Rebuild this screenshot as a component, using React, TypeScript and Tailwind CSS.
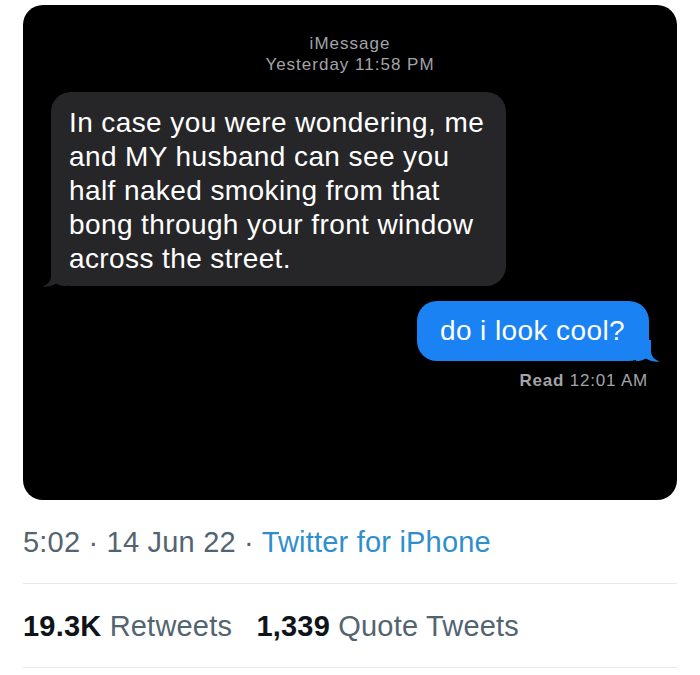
import React from "react";

function Tail({ color, flip }: { color: string; flip?: boolean }) {
  return (
    <svg
      width="24"
      height="22"
      viewBox="0 0 24 22"
      className={flip ? "absolute -right-[11px] bottom-[-1px] -scale-x-100" : "absolute -left-[9px] bottom-[-1px]"}
      aria-hidden="true"
    >
      <path
        d="M9 0 L9 11 C9 16 6 19.5 0 21.6 C6 22.2 11 20.6 14 18.4 C17 20 20 21 24 21 L24 0 Z"
        fill={color}
      />
    </svg>
  );
}

export default function App() {
  return (
    <div className="w-[700px] h-[675px] bg-white pt-[5px] px-[23px] font-['Liberation_Sans',Arial,sans-serif]">
      <div className="bg-black rounded-[20px] h-[495px] pt-[28px] flex flex-col">
        <div className="text-center text-[17px] leading-[21px] tracking-[1px] text-[#a3a3a8]">
          <p>iMessage</p>
          <p>Yesterday 11:58 PM</p>
        </div>

        <div className="relative ml-[28px] mt-[17px] w-[455px] bg-[#262628] rounded-[20px] pl-[18px] pr-[10px] pt-[14px] pb-[10px] text-white text-[28px] leading-[34px] tracking-[0.4px]">
          <p>
            In case you were wondering, me
            <br />
            and MY husband can see you
            <br />
            half naked smoking from that
            <br />
            bong through your front window
            <br />
            across the street.
          </p>
          <Tail color="#262628" />
        </div>

        <div className="flex flex-col items-end mr-[28px] mt-[15px]">
          <div className="relative bg-[#1a82f2] rounded-[20px] w-[232px] pl-[23px] py-[13px] text-white text-[28px] leading-[34px] tracking-[0.4px]">
            do i look cool?
            <Tail color="#1a82f2" flip />
          </div>
          <p className="mt-[9px] mr-px text-[17px] leading-[21px] tracking-[0.8px] text-[#a3a3a8]">
            <span className="font-bold">Read</span> 12:01 AM
          </p>
        </div>
      </div>

      <p className="mt-[25px] text-[29px] leading-[34px] tracking-[0.2px] text-[#536471]">
        5:02 · 14 Jun 22 · <span className="text-[#2f8fcc]">Twitter for iPhone</span>
      </p>
      <div className="mt-[24px] border-t border-[#e4e9ec]" />
      <p className="mt-[25px] text-[29px] leading-[34px] tracking-[0.2px] text-[#536471]">
        <span className="font-bold text-[#0f1419]">19.3K</span> Retweets{" "}
        <span className="ml-[16px] font-bold text-[#0f1419]">1,339</span> Quote Tweets
      </p>
      <div className="mt-[24px] border-t border-[#e4e9ec]" />
    </div>
  );
}
